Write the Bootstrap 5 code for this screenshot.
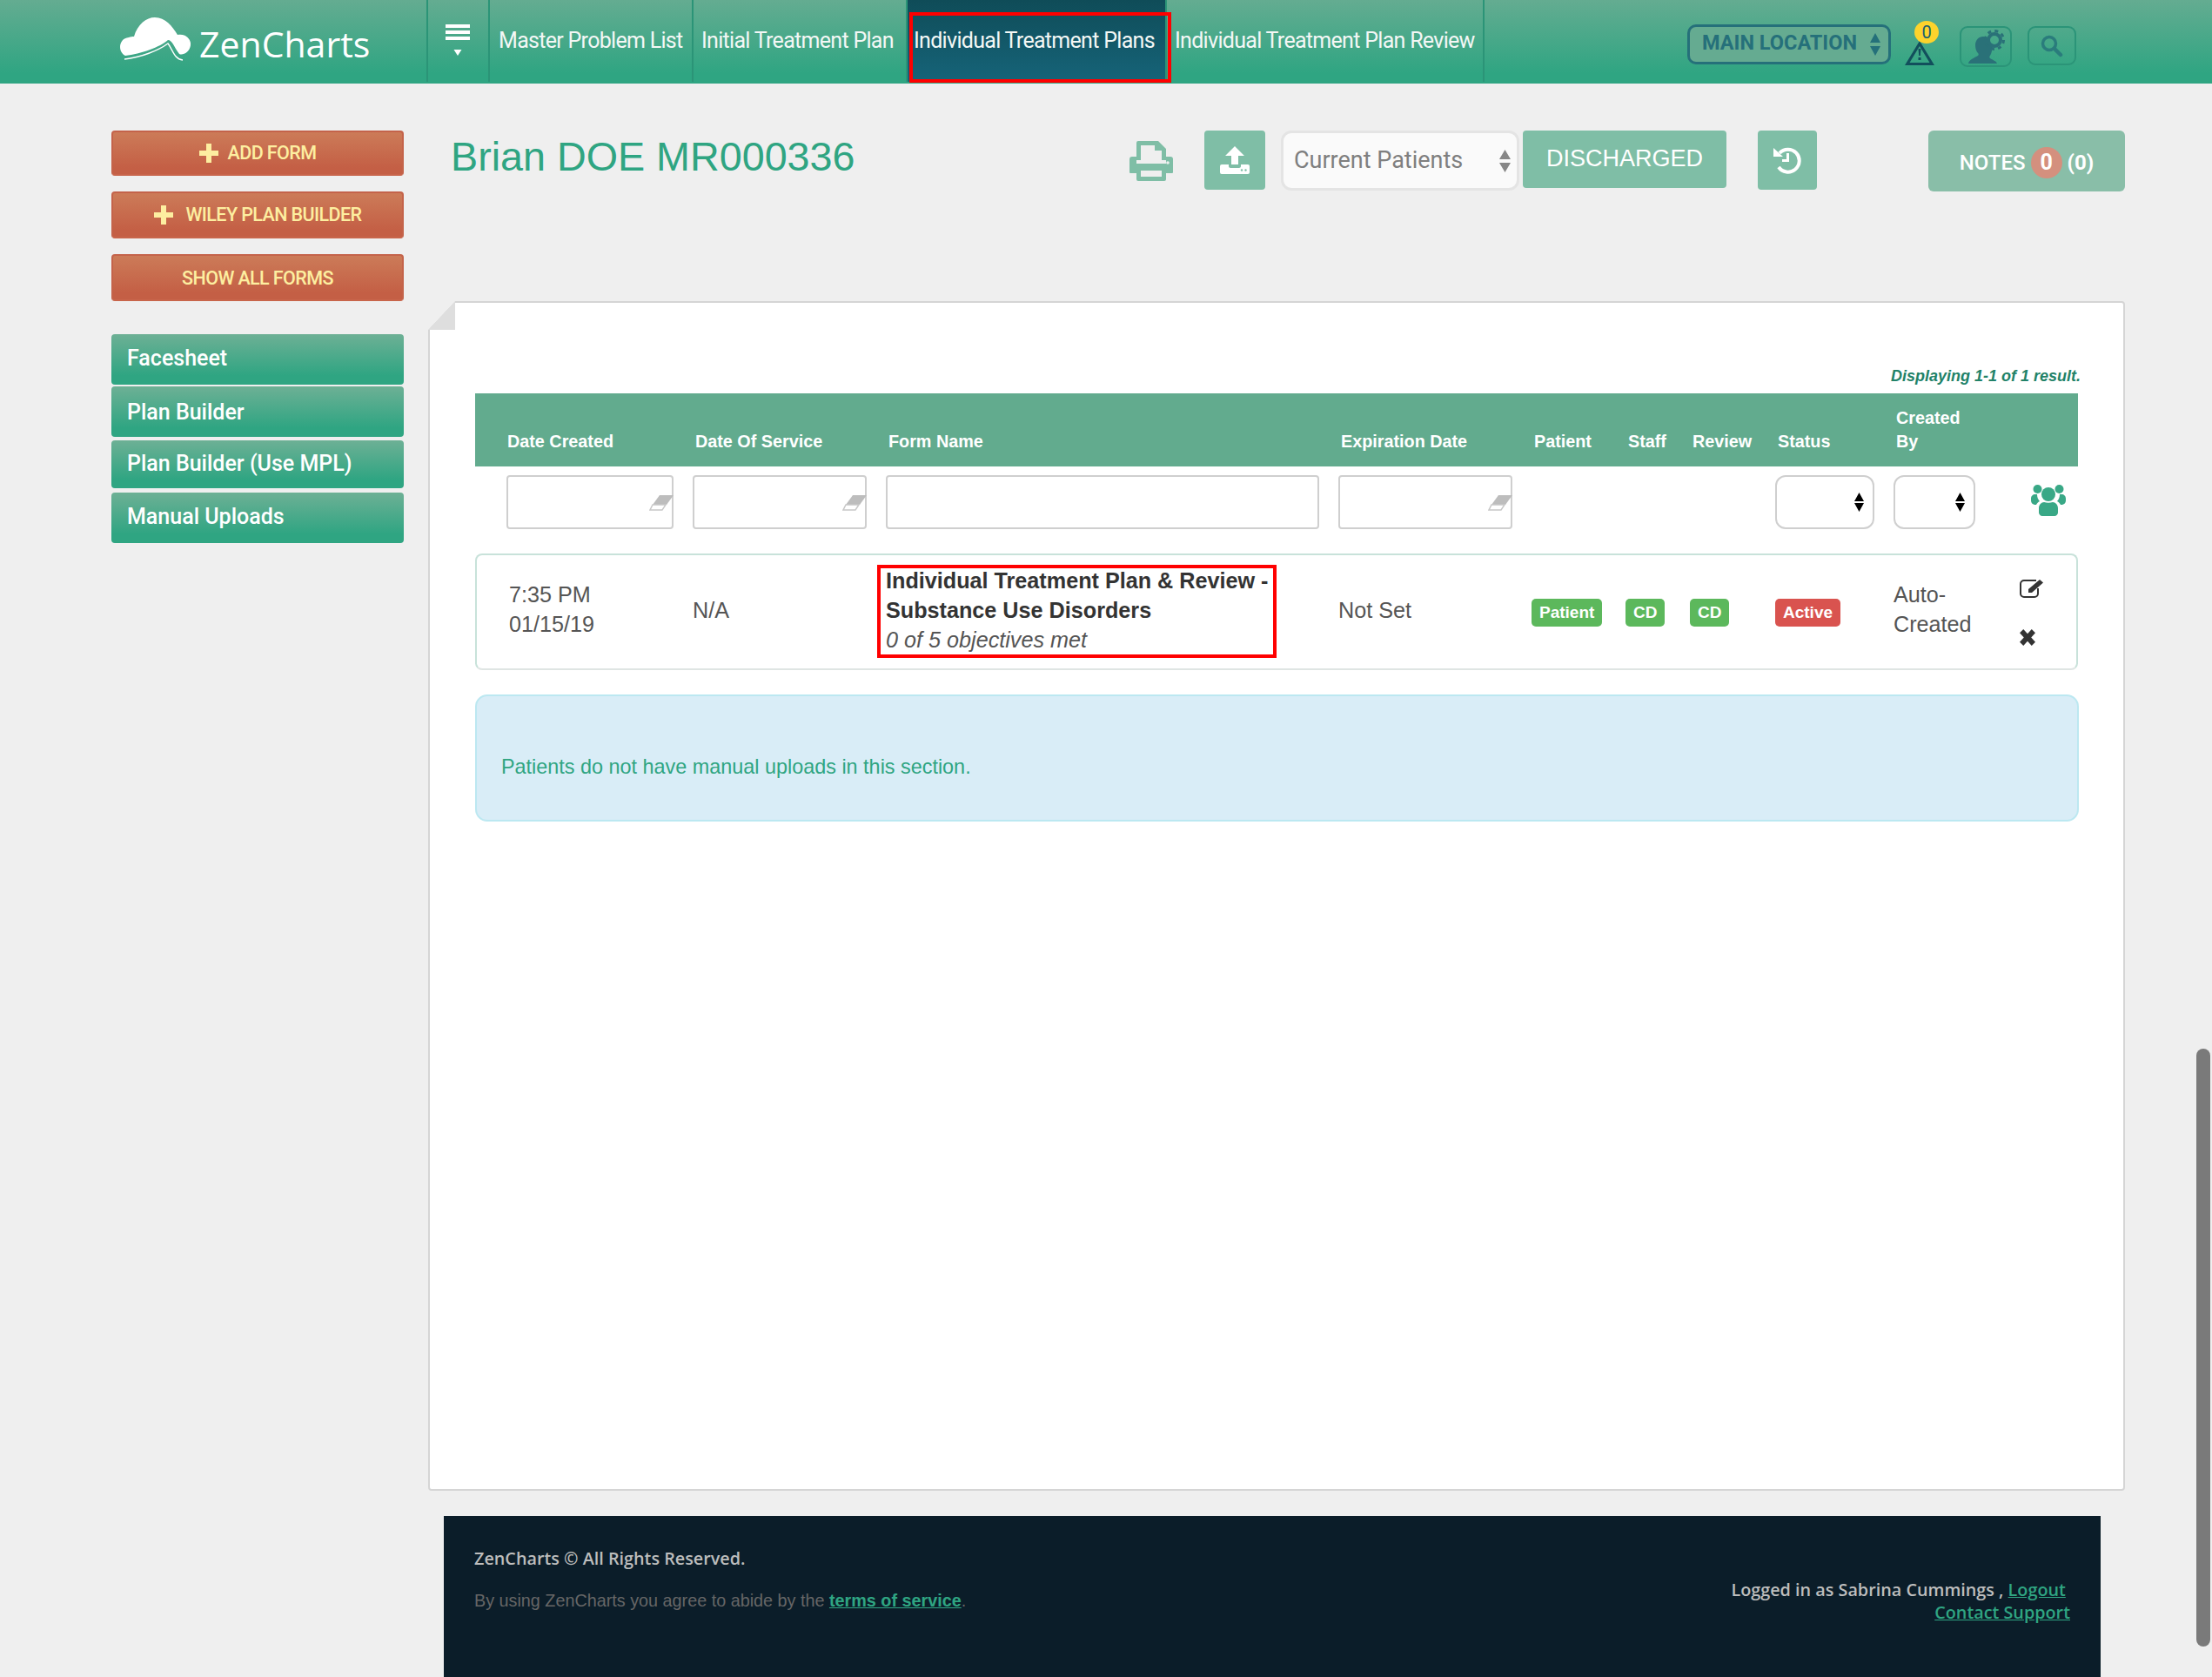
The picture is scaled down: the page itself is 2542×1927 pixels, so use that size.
<!DOCTYPE html>
<html lang="en">
<head>
<meta charset="utf-8">
<title>ZenCharts</title>
<link href="https://cdn.jsdelivr.net/npm/bootstrap@5.3.0/dist/css/bootstrap.min.css" rel="stylesheet">
<style>
html,body{height:1927px;overflow:hidden}
body{background:#efefef;font-family:"Liberation Sans",Arial,sans-serif;color:#555;position:relative}
.zc-top{height:96px;background:linear-gradient(#64ac91,#2fa582 88%);padding:0 156px 0 0;flex-wrap:nowrap;align-items:flex-start;justify-content:flex-start}
.zc-brand{width:490px;padding:20px 0 0 138px;margin:0;display:flex;gap:10px;color:#fff;font:400 41px/50px "Open Sans",sans-serif}
.zc-brand span{padding-top:5px}
.zc-brand:hover{color:#fff}
.zc-item{height:94px;border-left:2px solid #2b9477;display:block;color:#f3f7f5;font:400 25px/30px Roboto,sans-serif;letter-spacing:-.7px;padding:32px 0 0 9px;white-space:nowrap}
.zc-item:hover{color:#fff}
.zc-ham{width:71px;padding:28px 0 0 20px}
.zc-w1{width:234px;padding-left:10px}.zc-w2{width:246px}.zc-w4{width:367px;border-right:2px solid #2b9477;padding-left:9px}
.zc-on{width:298px;background:linear-gradient(#0f4c58,#166479);position:relative;padding-left:7px}
.zc-mark{position:absolute;left:2px;top:14px;width:301px;height:81px;border:4px solid #f00;pointer-events:none}
.zc-loc{width:234px;height:46px;margin:28px 0 0 auto;background-color:#65ab91;border:3px solid #25707a;border-radius:10px;color:#25707a;font:700 23.5px/1 Roboto,sans-serif;padding:0 0 2px 14px;background-image:url("data:image/svg+xml,%3Csvg xmlns='http://www.w3.org/2000/svg' width='12' height='26'%3E%3Cpath d='M6 0l6 11H0zM6 26L0 15h12z' fill='%2325707a'/%3E%3C/svg%3E");background-position:right 9px center;background-size:12px 26px}
.zc-warn{position:relative;width:40px;height:60px;margin:15px 0 0 16px;flex:none}
.zc-warn svg{position:absolute;left:0;top:32px}
.zc-dot{position:absolute;left:11px;top:9px;width:28px;height:26px;border-radius:50%;background:#fdd32c;color:#17606e;font:400 20px/26px Roboto,sans-serif;text-align:center}
.zc-box{border:2px solid #2b9478;border-radius:9px;display:flex;align-items:center;justify-content:center;margin-top:30px;flex:none}
.zc-b1{width:60px;height:47px;margin-left:23px}.zc-b2{width:56px;height:45px;margin-left:18px}
.zc-main{padding:54px 0 0 128px;gap:28px}
.zc-side{width:336px;flex:none}
.zc-red{display:flex;align-items:center;justify-content:center;gap:11px;width:100%;height:54px;padding:0;margin-bottom:18px;background:linear-gradient(#cc7b58,#c45f45 85%);border:2px solid #c4634a;border-bottom-color:#c8654b;border-radius:4px;color:#fdeea0;font:500 21.5px/1 Roboto,sans-serif;letter-spacing:-.6px}
.zc-red:hover{color:#fdeea0;background:#c45f45;border-color:#c4634a}
.zc-first{height:52px}
.zc-low{padding-top:2px}
.zc-menu{margin-top:38px;padding:0;gap:2px;list-style:none}
.zc-menu a{display:block;height:58px;padding:15px 0 0 18px;background:linear-gradient(#6db095,#2fa582 82%);border-radius:4px;color:#fff;font:500 25px/30px Roboto,sans-serif;text-decoration:none}
.zc-menu li:first-child a{padding-top:13px}
.zc-menu li:last-child a{padding-top:13px}
.zc-menu .zc-li3 a{height:55px;padding-top:12px;margin:2px 0 3px}
.zc-content{width:1950px;flex:none}
.zc-head{height:196px;align-items:flex-start}
.zc-title{flex-grow:1;margin:0 0 0 26px;color:#2fa582;font:400 46.700px/60px "Liberation Sans",sans-serif}
.zc-print{margin:12px 36px 0 0;flex:none}
.zc-tint{background:#7fbea6;border:0;border-radius:4px;color:#fff;display:flex;align-items:center;justify-content:center;padding:0;height:68px;flex:none}
.zc-tint:hover{background:#7fbea6;color:#fff}
.zc-up{width:70px;margin-right:18px}
.zc-cur{width:274px;height:69px;flex:none;background-color:#fafafa;border:3px solid #e4e4e4;border-radius:12px;color:#7f7f7f;font:400 27px/1 Roboto,sans-serif;padding:0 0 0 12px;background-image:url("data:image/svg+xml,%3Csvg xmlns='http://www.w3.org/2000/svg' width='13' height='26'%3E%3Cpath d='M6.500 0l6.500 11H0zM6.500 26L0 15h13z' fill='%23878787'/%3E%3C/svg%3E");background-position:right 7px center;background-size:13px 26px}
.zc-dis{width:234px;height:66px;margin:0 36px 0 4px;font:400 27px/1 "Liberation Sans",sans-serif;padding-bottom:2px}
.zc-hist{width:68px;margin-right:128px}
.zc-notes{width:226px;height:70px;flex:none;background:#89bea8;border:0;border-radius:6px;color:#fff;font:500 24px/1 Roboto,sans-serif;display:flex;align-items:center;justify-content:center;gap:6px;padding:4px 0 0}
.zc-notes:hover{background:#89bea8;color:#fff}
.zc-count{width:36px;height:36px;border-radius:50%;background:#d4907e;font:700 25px/36px Roboto,sans-serif;padding:0;display:block}
.zc-paper{height:1367px;position:relative;background:#fff;border:2px solid #d5d5d5;border-radius:0 4px 4px 4px;padding:73px 52px 0}
.zc-fold{position:absolute;left:-2px;top:-2px;width:31px;height:33px;background:linear-gradient(to bottom right,#efefef 49.5%,#dedede 50.5%)}
.zc-count-line{font:italic 700 18px/22px "Liberation Sans",sans-serif;color:#228268;text-align:right;margin:0 -3px 9px 0}
.zc-tpl{display:grid;grid-template-columns:250px 222px 520px 222px 108px 74px 98px 136px 142px 70px}
.zc-th{height:84px;background:#62ab8e;align-items:end;padding-bottom:15px;color:#fff;font:700 19.800px/27px "Liberation Sans",sans-serif}
.zc-th>div{padding-left:3px}
.zc-th>div:first-child{padding-left:37px}
.zc-filter{height:62px;margin-top:10px;position:relative}
.zc-in{height:62px;display:block;border:2px solid #cfcfcf;border-radius:4px;padding:0;box-shadow:none}
.zc-er{position:relative}
.zc-er svg{position:absolute;right:0;top:23px}
.zc-i1{margin-left:36px;width:192px}
.zc-i2{width:200px}.zc-i3{width:498px}.zc-i4{width:200px}
.zc-fs{height:62px;border:2px solid #cfcfcf;border-radius:12px;background-color:#fff;padding:0;background-image:url("data:image/svg+xml,%3Csvg xmlns='http://www.w3.org/2000/svg' width='11' height='22'%3E%3Cpath d='M5.500 0l5.500 10H0zM5.500 22L0 12h11z'/%3E%3C/svg%3E");background-position:right 10px center;background-size:11px 22px}
.zc-fs1{width:114px}.zc-fs2{width:94px}
.zc-users{margin:11px 0 0 16px}
.zc-card{margin-top:28px;height:134px;padding-bottom:4px;border:2px solid #c8e2da;border-bottom-color:#dfe5e3;border-radius:8px;grid-template-columns:248px 222px 520px 222px 108px 74px 98px 136px 142px 68px;align-items:center;font:400 25.200px/34px "Liberation Sans",sans-serif;color:#555}
.zc-c1{padding-left:37px}
.zc-up1{margin-bottom:3px}
.zc-redbox{width:459px;height:107px;margin:3px 0 0 -10px;border:4px solid #f00;padding:0 0 3px 6px;display:flex;flex-direction:column;justify-content:center;white-space:nowrap}
.zc-redbox strong{color:#333;font-weight:700;line-height:34px}
.zc-redbox em{line-height:34px}
.zc-tag{display:inline-block;height:32px;padding:0 9px;border-radius:5px;font:700 19px/32px "Liberation Sans",sans-serif;color:#fff;vertical-align:top;margin-top:5px}
.zc-g{background:#5cb85c}.zc-r{background:#d9534f}
.zc-act{position:relative;height:100%}
.zc-act svg{position:absolute}
.zc-info{margin:28px -1px 0 0;height:146px;background:#d9edf7;border:2px solid #bce8f1;border-radius:14px;color:#2fa582;font:400 23.400px/30px "Liberation Sans",sans-serif;padding:66px 28px 0}
.zc-foot{height:185px;margin:29px 0 0 18px;width:1904px;background:#0b1d29;padding:0 35px;justify-content:space-between;position:relative}
.zc-f1{font:600 19.800px/26px "Open Sans",sans-serif;color:#bdbdbd;margin:36px 0 0}
.zc-f2{font:400 19.800px/26px "Liberation Sans",sans-serif;color:#666;margin:22px 0 0}
.zc-f2 a{font-weight:700;color:#2fa582}
.zc-f3{font:600 19.800px/26px "Open Sans",sans-serif;color:#bdbdbd;text-align:right;margin:72px 0 0}
.zc-f3 a{color:#2fa582}
.zc-scroll{position:absolute;left:2524px;top:1205px;width:16px;height:687px;background:#7a7a7a;border-radius:8px}
</style>
</head>
<body>
<nav class="navbar zc-top">
  <a class="navbar-brand zc-brand" href="#">
    <svg width="81" height="50" viewBox="0 0 81 50"><path fill="#fff" d="M6 44C-3 40-2 24 10 23c2-1 4-1 6-1C20 8 30 0 40 0c12 0 20 10 26 20 10-2 16 6 15 12-1 8-9 12-13 10-6-8-8-16-13-16-9 8-31 16-49 18z"/><path fill="none" stroke="#fff" stroke-width="1.500" d="M5 48c19-2 39-10 50-18 5 6 7 18 17 19"/></svg>
    <span>ZenCharts</span>
  </a>
  <a class="zc-item zc-ham" href="#" aria-label="Menu"><svg width="28" height="40" viewBox="0 0 28 40"><path fill="#fff" d="M0 0h28v4H0zM0 7h28v4H0zM0 14h28v4H0zM9.500 29h9L14 36z"/></svg></a>
  <a class="zc-item zc-w1 text-decoration-none" href="#">Master Problem List</a>
  <a class="zc-item zc-w2 text-decoration-none" href="#">Initial Treatment Plan</a>
  <a class="zc-item zc-on text-decoration-none" href="#">Individual Treatment Plans<span class="zc-mark"></span></a>
  <a class="zc-item zc-w4 text-decoration-none" href="#">Individual Treatment Plan Review</a>
  <select class="form-select zc-loc" aria-label="Location"><option>MAIN LOCATION</option></select>
  <div class="zc-warn">
    <svg width="34" height="28" viewBox="0 0 34 28"><path fill="#124f5c" fill-rule="evenodd" d="M17 0l17 28H0zM17 6L5.500 25h23z"/><path fill="#124f5c" d="M15.500 9h3l-.7 8h-1.600zM15.500 19h3v3h-3z"/></svg>
    <span class="zc-dot">0</span>
  </div>
  <a class="zc-box zc-b1" href="#" aria-label="Settings"><svg width="46" height="40" viewBox="0 0 46 40"><path fill="#2a7178" d="M3 39c1-5 8-7 11-9 1-1 1-2 0-3-2-2-3-6-3-9 0-6 4-10 9-10 3 0 5 1 6 3-1 4 1 8 5 9-1 3-1 7-3 10-1 1-1 2 0 3 3 2 7 3 8 6z"/><circle cx="33" cy="12" r="7" fill="none" stroke="#2a7178" stroke-width="4"/><circle cx="33" cy="12" r="10.500" fill="none" stroke="#2a7178" stroke-width="3" stroke-dasharray="4 4.240"/></svg></a>
  <a class="zc-box zc-b2" href="#" aria-label="Search"><svg width="26" height="26" viewBox="0 0 26 26"><circle cx="10" cy="10" r="7.500" fill="none" stroke="#2a7c7c" stroke-width="3.500"/><path stroke="#2a7c7c" stroke-width="4.500" stroke-linecap="round" d="M16 16l7 7"/></svg></a>
</nav>

<div class="d-flex zc-main">
  <aside class="zc-side">
    <a class="btn zc-red zc-first" href="#"><svg width="22" height="22" viewBox="0 0 22 22"><path fill="#fdeea0" d="M8 0h6v8h8v6h-8v8H8v-8H0V8h8z"/></svg>ADD FORM</a>
    <a class="btn zc-red" href="#"><svg width="22" height="22" viewBox="0 0 22 22"><path fill="#fdeea0" d="M8 0h6v8h8v6h-8v8H8v-8H0V8h8z"/></svg><span class="ms-1">WILEY PLAN BUILDER</span></a>
    <a class="btn zc-red zc-low mb-0" href="#">SHOW ALL FORMS</a>
    <ul class="d-flex flex-column zc-menu">
      <li><a href="#">Facesheet</a></li>
      <li><a href="#">Plan Builder</a></li>
      <li class="zc-li3"><a href="#">Plan Builder (Use MPL)</a></li>
      <li><a href="#">Manual Uploads</a></li>
    </ul>
  </aside>

  <main class="zc-content">
    <div class="d-flex zc-head">
      <h1 class="zc-title">Brian DOE MR000336</h1>
      <svg class="zc-print" width="50" height="46" viewBox="0 0 50 46"><g fill="#7fbea6"><path fill-rule="evenodd" d="M8 2a2 2 0 0 1 2-2h23l9 9v13h-5V11h-8V5H13v17H8zM0 21a3 3 0 0 1 3-3h5v8h34v-8h5a3 3 0 0 1 3 3v15a1 1 0 0 1-1 1h-7v7a2 2 0 0 1-2 2H10a2 2 0 0 1-2-2v-7H1a1 1 0 0 1-1-1zM13 34v7h24v-7z"/></g><circle cx="44" cy="25" r="1.800" fill="#efefef"/></svg>
      <button class="btn zc-tint zc-up" type="button" aria-label="Upload"><svg width="34" height="32" viewBox="0 0 34 32"><path fill="#fff" d="M17 0l11 11h-7v10h-8V11H6zM2 21h8v2c0 1 1 2 2 2h10c1 0 2-1 2-2v-2h8a2 2 0 0 1 2 2v7a2 2 0 0 1-2 2H2a2 2 0 0 1-2-2v-7a2 2 0 0 1 2-2z"/><circle cx="25" cy="27.500" r="1.200" fill="#7fbea6"/><circle cx="29.500" cy="27.500" r="1.200" fill="#7fbea6"/></svg></button>
      <select class="form-select zc-cur" aria-label="Patients"><option>Current Patients</option></select>
      <button class="btn zc-tint zc-dis" type="button">DISCHARGED</button>
      <button class="btn zc-tint zc-hist" type="button" aria-label="History"><svg width="32" height="32" viewBox="0 0 32 32"><path fill="none" stroke="#fff" stroke-width="4" d="M7 8a13 13 0 1 1-1 16"/><path fill="#fff" d="M0 2l11 10H0zM15 8h3v10h-8v-3h5z"/></svg></button>
      <button class="btn zc-notes" type="button">NOTES <span class="zc-count">0</span> <b>(0)</b></button>
    </div>

    <section class="zc-paper">
      <span class="zc-fold"></span>
      <p class="zc-count-line">Displaying 1-1 of 1 result.</p>
      <div class="zc-tpl zc-th">
        <div>Date Created</div><div>Date Of Service</div><div>Form Name</div><div>Expiration Date</div><div>Patient</div><div>Staff</div><div>Review</div><div>Status</div><div>Created<br>By</div><div></div>
      </div>
      <div class="zc-tpl zc-filter">
        <div class="zc-er zc-i1"><input class="form-control zc-in" aria-label="Date created"><svg width="28" height="18" viewBox="0 0 28 18"><path fill="#bdbdbd" d="M12 0h16l-8 11H4z"/><path fill="#fff" stroke="#c8c8c8" stroke-width="1.500" d="M4 11h15l-4 6H1z"/></svg></div>
        <div class="zc-er zc-i2"><input class="form-control zc-in" aria-label="Date of service"><svg width="28" height="18" viewBox="0 0 28 18"><path fill="#bdbdbd" d="M12 0h16l-8 11H4z"/><path fill="#fff" stroke="#c8c8c8" stroke-width="1.500" d="M4 11h15l-4 6H1z"/></svg></div>
        <div class="zc-i3"><input class="form-control zc-in" aria-label="Form name"></div>
        <div class="zc-er zc-i4"><input class="form-control zc-in" aria-label="Expiration date"><svg width="28" height="18" viewBox="0 0 28 18"><path fill="#bdbdbd" d="M12 0h16l-8 11H4z"/><path fill="#fff" stroke="#c8c8c8" stroke-width="1.500" d="M4 11h15l-4 6H1z"/></svg></div>
        <div></div><div></div><div></div>
        <div><select class="form-select zc-fs zc-fs1" aria-label="Status"><option></option></select></div>
        <div><select class="form-select zc-fs zc-fs2" aria-label="Created by"><option></option></select></div>
        <div><svg class="zc-users" width="40" height="36" viewBox="0 0 40 36"><g fill="#39a886"><circle cx="7.500" cy="5" r="5"/><circle cx="32.500" cy="5" r="5"/><path d="M0 16c0-3 2-5 5-5h2c0 3 1 6 3 8-2 1-3 2-4 4-4 0-6-2-6-5zM40 16c0-3-2-5-5-5h-2c0 3-1 6-3 8 2 1 3 2 4 4 4 0 6-2 6-5z"/><circle cx="20" cy="11" r="8"/><path d="M9 27c0-4 3-7 6-7 3 1 7 1 10 0 3 0 6 3 6 7v5c0 2-2 4-4 4H13c-2 0-4-2-4-4z"/></g></svg></div>
      </div>
      <div class="zc-tpl zc-card">
        <div class="zc-c1 zc-up1">7:35 PM<br>01/15/19</div>
        <div>N/A</div>
        <div><div class="zc-redbox"><strong>Individual Treatment Plan &amp; Review -</strong><strong>Substance Use Disorders</strong><em>0 of 5 objectives met</em></div></div>
        <div>Not Set</div>
        <div><span class="zc-tag zc-g">Patient</span></div>
        <div><span class="zc-tag zc-g">CD</span></div>
        <div><span class="zc-tag zc-g">CD</span></div>
        <div><span class="zc-tag zc-r">Active</span></div>
        <div class="zc-up1">Auto-<br>Created</div>
        <div class="zc-act">
          <svg style="left:3px;top:28px" width="27" height="21" viewBox="0 0 27 21"><path fill="none" stroke="#333" stroke-width="2" d="M19 1H5a4 4 0 0 0-4 4v11a4 4 0 0 0 4 4h12a4 4 0 0 0 4-4v-6"/><path fill="#333" d="M23 0l4 3.500L14 15H10v-4z"/></svg>
          <svg style="left:3px;top:85px" width="18" height="19" viewBox="0 0 17 18"><path fill="#333" d="M4 0l4.500 5L13 0l4 4-4.500 5 4.500 5-4 4-4.500-5L4 18l-4-4 4.500-5L0 4z"/></svg>
        </div>
      </div>
      <div class="zc-info">Patients do not have manual uploads in this section.</div>
    </section>

    <footer class="d-flex zc-foot">
      <div>
        <p class="zc-f1">ZenCharts © All Rights Reserved.</p>
        <p class="zc-f2">By using ZenCharts you agree to abide by the <a href="#">terms of service</a>.</p>
      </div>
      <div class="zc-f3">Logged in as Sabrina Cummings , <a href="#">Logout</a>&nbsp;<br><a href="#">Contact Support</a></div>
    </footer>
  </main>
</div>
<div class="zc-scroll"></div>
<script src="https://cdn.jsdelivr.net/npm/bootstrap@5.3.0/dist/js/bootstrap.bundle.min.js"></script>
</body>
</html>
